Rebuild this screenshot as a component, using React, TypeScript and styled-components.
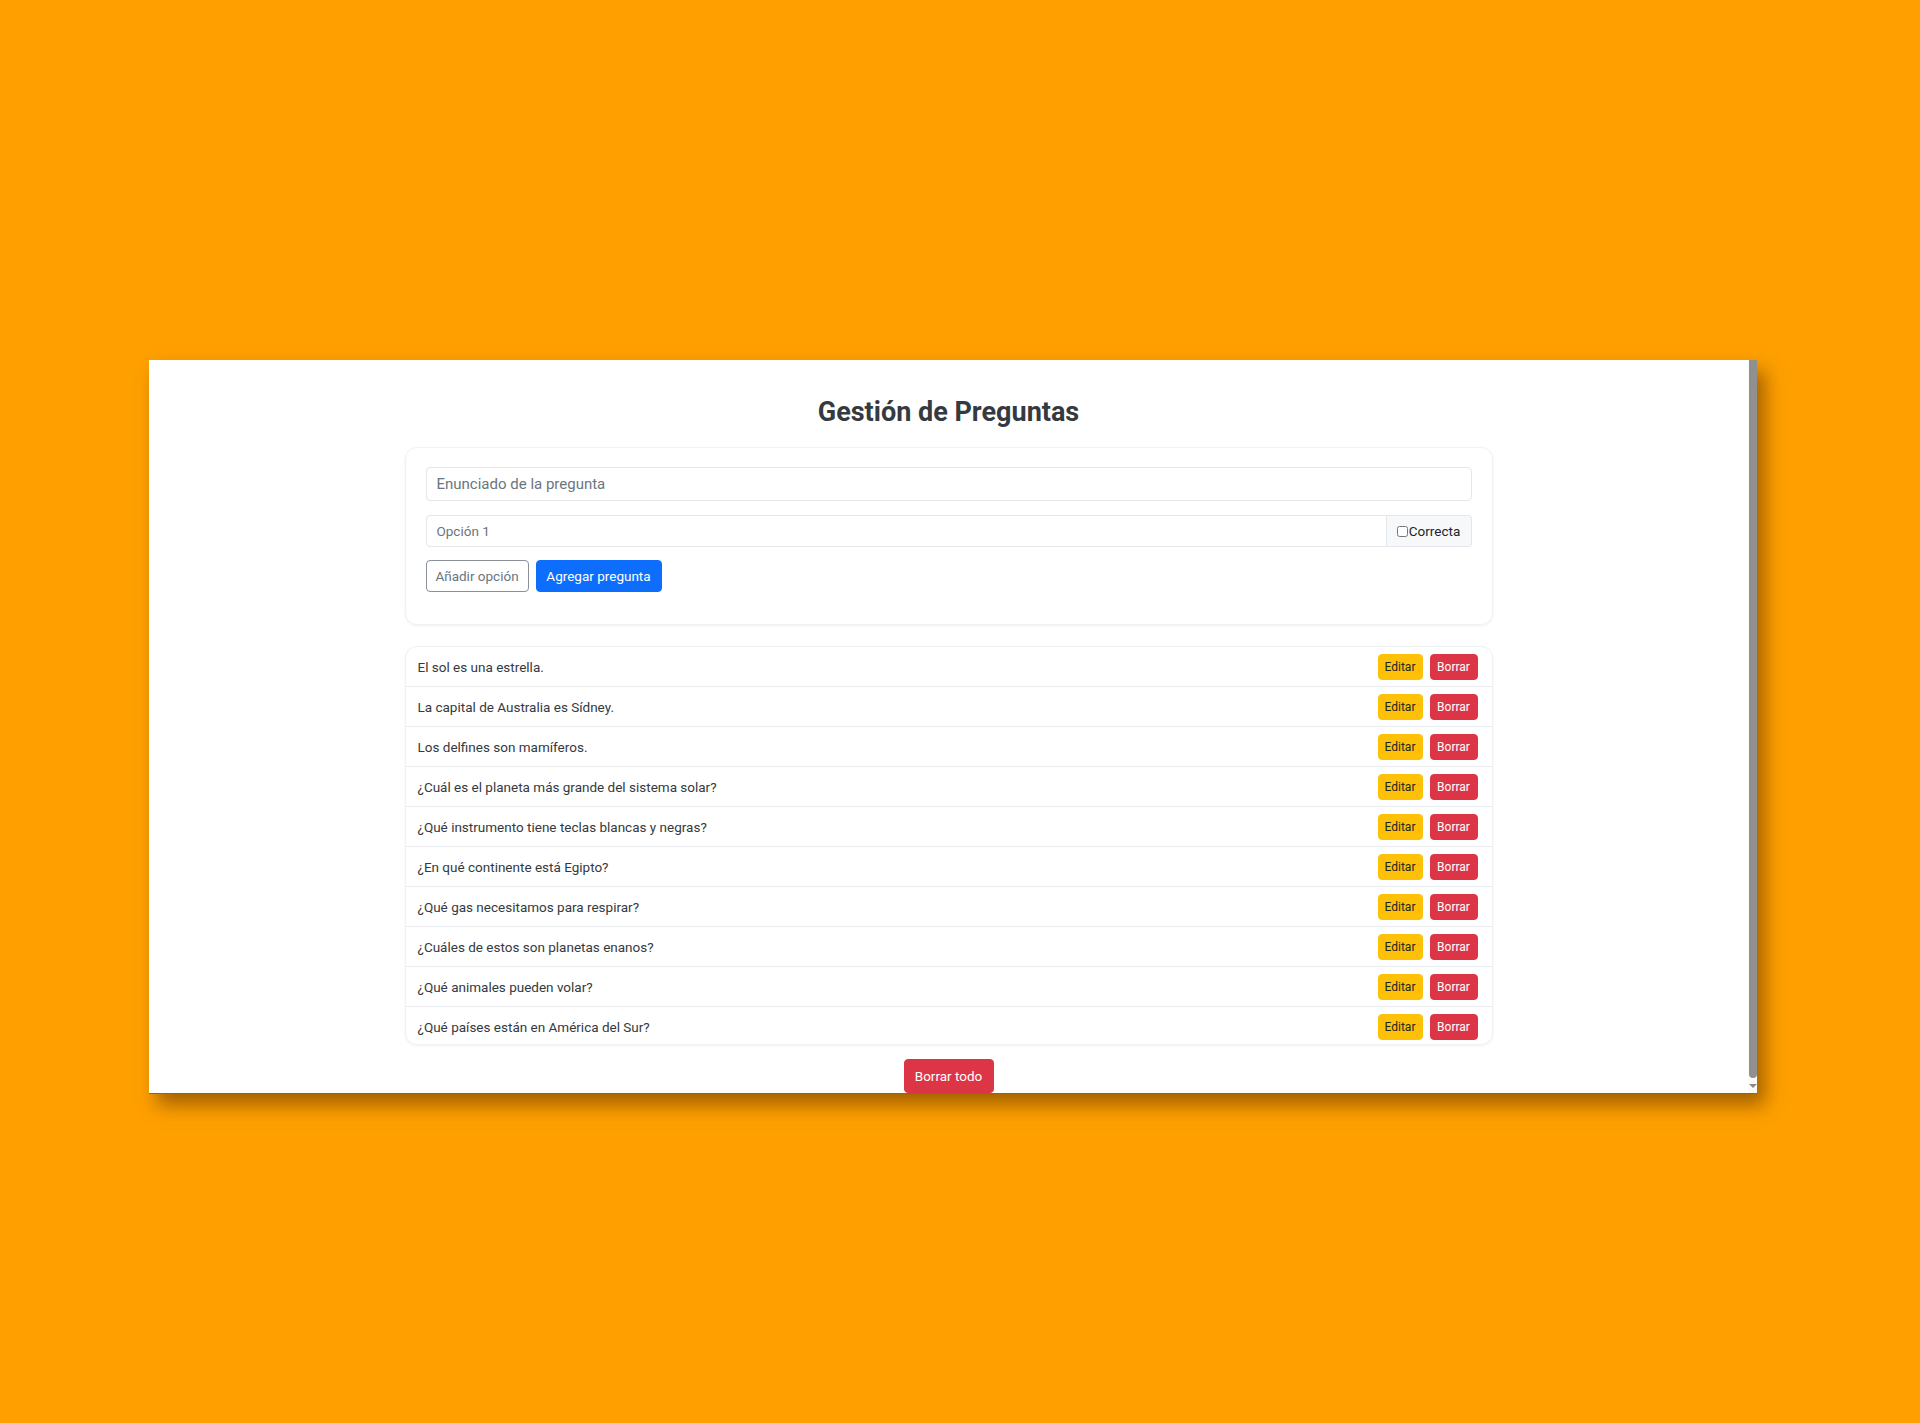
import React from "react";
import styled, { createGlobalStyle } from "styled-components";

const Global = createGlobalStyle`
  html, body { margin: 0; padding: 0; }
  body {
    background: #ffa000;
    font-family: Roboto, "Liberation Sans", Arial, sans-serif;
    width: 1920px;
    height: 1423px;
    overflow: hidden;
  }
  * { box-sizing: border-box; }
`;

const Stage = styled.div`
  padding: 360px 0 0 149px;
`;

const Window = styled.div`
  width: 1608px;
  height: 734px;
  background: #ffffff;
  display: flex;
  box-shadow: 8px 11px 18px rgba(70, 35, 0, 0.5);
  border-bottom: 1px solid #6a6a6a;
`;

const Content = styled.div`
  flex: 1;
  overflow: hidden;
  display: flex;
  flex-direction: column;
  align-items: center;
  padding-top: 36px;
`;

const Scrollbar = styled.div`
  width: 9px;
  display: flex;
  flex-direction: column;
  align-items: center;
  background: #fafafa;
`;

const Thumb = styled.div`
  width: 8px;
  height: 718px;
  background: #909090;
  border-radius: 0 0 4px 4px;
`;

const Arrow = styled.div`
  margin-top: 6px;
  width: 0;
  height: 0;
  border-left: 4px solid transparent;
  border-right: 4px solid transparent;
  border-top: 4px solid #8a8a8a;
`;

const Title = styled.h2`
  margin: 0;
  font-size: 27px;
  line-height: 1.2;
  font-weight: 700;
  color: #343a40;
`;

const Card = styled.div`
  width: 1088px;
  background: #fff;
  border: 1px solid #f1f2f4;
  border-radius: 12px;
  box-shadow: 0 1px 3px rgba(0, 0, 0, 0.06);
`;

const FormCard = styled(Card)`
  margin-top: 19px;
  padding: 19px 20px 32px;
  display: flex;
  flex-direction: column;
`;

const TextInput = styled.input<{ $h: number; $fs: number }>`
  height: ${(p) => p.$h}px;
  width: 100%;
  border: 1px solid #e3e6ea;
  border-radius: 4px;
  padding: 0 10px;
  font-family: inherit;
  font-size: ${(p) => p.$fs}px;
  color: #495057;
  background: #fff;
  &::placeholder { color: #6c757d; }
`;

const OptionRow = styled.div`
  margin-top: 14px;
  display: flex;
  height: 32px;
`;

const OptionInput = styled(TextInput)`
  flex: 1;
  border-radius: 4px 0 0 4px;
`;

const Addon = styled.label`
  width: 85px;
  display: flex;
  align-items: center;
  justify-content: center;
  gap: 1px;
  background: #f7f8f9;
  border: 1px solid #e3e6ea;
  border-left: none;
  border-radius: 0 4px 4px 0;
  font-size: 13.5px;
  color: #212529;
`;

const Check = styled.input`
  margin: 0;
  width: 11px;
  height: 11px;
`;

const ButtonRow = styled.div`
  margin-top: 13px;
  display: flex;
  gap: 7px;
`;

const Btn = styled.button<{ $variant: "outline" | "primary" | "warning" | "danger"; $w: number; $h: number; $fs: number }>`
  width: ${(p) => p.$w}px;
  height: ${(p) => p.$h}px;
  padding: 0;
  font-family: inherit;
  font-size: ${(p) => p.$fs}px;
  border-radius: 4px;
  cursor: pointer;
  flex-shrink: 0;
  ${(p) =>
    p.$variant === "outline"
      ? `background: #fff; border: 1px solid #8a9097; color: #6c757d;`
      : p.$variant === "primary"
      ? `background: #0d6efd; border: 1px solid #0d6efd; color: #fff;`
      : p.$variant === "warning"
      ? `background: #ffc107; border: 1px solid #ffc107; color: #212529;`
      : `background: #dc3545; border: 1px solid #dc3545; color: #fff;`}
`;

const ListCard = styled(Card)`
  margin-top: 21px;
  overflow: hidden;
`;

const Row = styled.div`
  height: 40px;
  display: flex;
  align-items: center;
  padding: 0 14px 0 12px;
  border-top: 1px solid #eaecef;
  &:first-child { border-top: none; height: 39px; }
`;

const RowText = styled.span`
  flex: 1;
  font-size: 13.5px;
  color: #343a40;
`;

const Actions = styled.div`
  display: flex;
  gap: 7px;
`;

const Footer = styled.div`
  margin-top: 14px;
`;

const questions = [
  "El sol es una estrella.",
  "La capital de Australia es Sídney.",
  "Los delfines son mamíferos.",
  "¿Cuál es el planeta más grande del sistema solar?",
  "¿Qué instrumento tiene teclas blancas y negras?",
  "¿En qué continente está Egipto?",
  "¿Qué gas necesitamos para respirar?",
  "¿Cuáles de estos son planetas enanos?",
  "¿Qué animales pueden volar?",
  "¿Qué países están en América del Sur?",
];

export default function App() {
  return (
    <>
      <Global />
      <Stage>
        <Window>
          <Content>
            <Title>Gestión de Preguntas</Title>
            <FormCard>
              <TextInput $h={34} $fs={15} placeholder="Enunciado de la pregunta" />
              <OptionRow>
                <OptionInput $h={32} $fs={13.5} placeholder="Opción 1" />
                <Addon>
                  <Check type="checkbox" />
                  Correcta
                </Addon>
              </OptionRow>
              <ButtonRow>
                <Btn $variant="outline" $w={103} $h={32} $fs={13.5}>Añadir opción</Btn>
                <Btn $variant="primary" $w={126} $h={32} $fs={13.5}>Agregar pregunta</Btn>
              </ButtonRow>
            </FormCard>
            <ListCard>
              {questions.map((q) => (
                <Row key={q}>
                  <RowText>{q}</RowText>
                  <Actions>
                    <Btn $variant="warning" $w={45} $h={26} $fs={12}>Editar</Btn>
                    <Btn $variant="danger" $w={48} $h={26} $fs={12}>Borrar</Btn>
                  </Actions>
                </Row>
              ))}
            </ListCard>
            <Footer>
              <Btn $variant="danger" $w={90} $h={34} $fs={13.5}>Borrar todo</Btn>
            </Footer>
          </Content>
          <Scrollbar>
            <Thumb />
            <Arrow />
          </Scrollbar>
        </Window>
      </Stage>
    </>
  );
}
